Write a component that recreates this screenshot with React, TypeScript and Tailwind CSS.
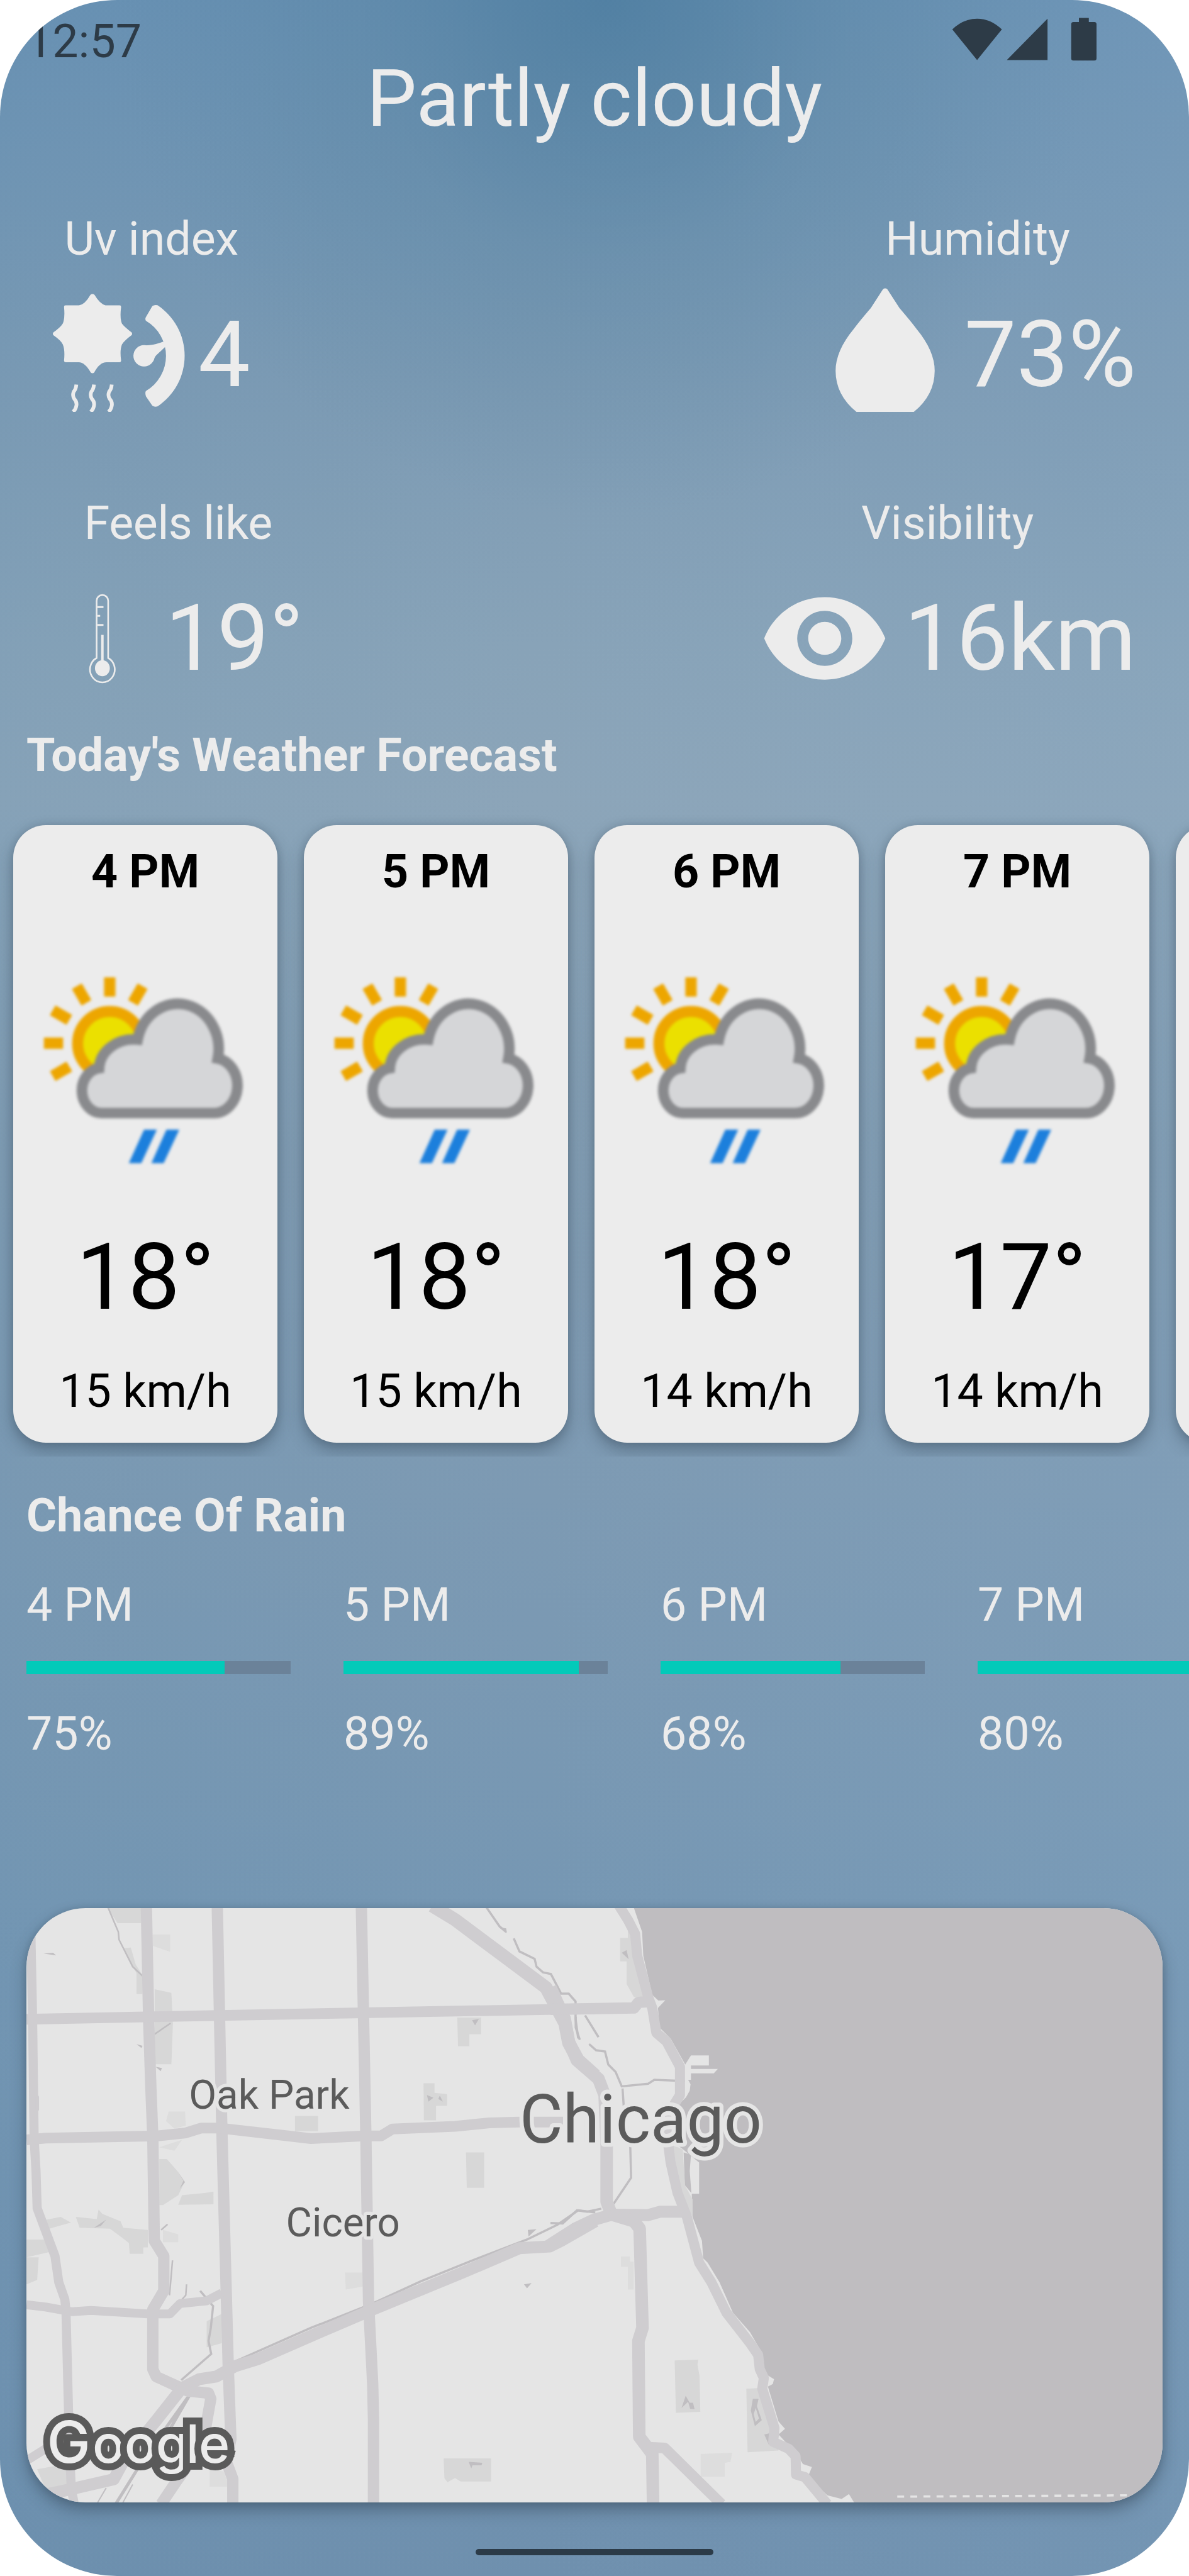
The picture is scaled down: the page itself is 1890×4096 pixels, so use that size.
import React from "react";

const hours = [
  { time: "4 PM", temp: "18°", wind: "15 km/h" },
  { time: "5 PM", temp: "18°", wind: "15 km/h" },
  { time: "6 PM", temp: "18°", wind: "14 km/h" },
  { time: "7 PM", temp: "17°", wind: "14 km/h" },
  { time: "", temp: "", wind: "" },
];

const rain = [
  { time: "4 PM", chance: 75 },
  { time: "5 PM", chance: 89 },
  { time: "6 PM", chance: 68 },
  { time: "7 PM", chance: 80 },
];

function StatusIcons() {
  return (
    <svg className="h-[80.5px] w-[245px] fill-[#2d3b47]" viewBox="1720 24 280 92">
      <path d="M1775 109L1730 53.500Q1750 34 1775 34Q1800 34 1820 53.500Z" />
      <path d="M1903 34V109H1829Z" />
      <path d="M1960 32.500H1978V40H1988Q1992 40 1992 44V106Q1992 110 1988 110H1950Q1946 110 1946 106V44Q1946 40 1950 40H1960Z" />
    </svg>
  );
}

function UvIcon() {
  const wave = "M176 565Q174 590 162 603Q153 625 165 643Q178 655 177 675Q174 700 158 713";
  return (
    <svg className="size-[210px] fill-[#ececec]" viewBox="48 -6 720 720">
      <path d="M253 75Q264 67 275 75Q303 123 335 133H412Q420 133 420 141Q412 205 425 233Q440 252 478 281Q482 288 478 295Q440 323 425 345Q412 375 420 435Q420 443 412 443H345Q303 440 273 500Q264 506 255 500Q222 440 185 443H117Q109 443 109 435Q115 375 102 345Q90 323 51 296Q45 288 51 280Q90 252 102 232Q115 205 109 141Q109 133 117 133H190Q222 129 253 75Z" />
      <path d="M618 132A331 331 0 0 1 618 684Q602 688 590 680L556 630Q549 610 555 600A222 222 0 0 0 555 217Q549 205 556 195L590 137Q602 128 618 132Z" />
      <circle cx="545" cy="408" r="58" />
      <path d="M545 351Q590 354 650 331L664 356L612 405Q602 415 595 437Z" />
      <g className="fill-none stroke-[#ececec]" strokeWidth="20">
        <path d={wave} />
        <path d={wave} transform="translate(96 0)" />
        <path d={wave} transform="translate(193 0)" />
      </g>
    </svg>
  );
}

function DropIcon() {
  return (
    <svg className="size-[210px] fill-[#ececec]" viewBox="1488 508 240 240">
      <path d="M1604 525Q1608 522 1612 525L1634 559Q1652 580 1665 597Q1698 637 1698 673Q1698 717 1660 748H1556Q1518 717 1518 673Q1518 637 1551 597Q1564 580 1582 559Z" />
    </svg>
  );
}

function EyeIcon() {
  return (
    <svg className="size-[210px] fill-[#ececec]" viewBox="0 0 24 24">
      <path d="M12 4.500C7 4.500 2.730 7.610 1 12c1.730 4.390 6 7.500 11 7.500s9.270-3.110 11-7.500c-1.730-4.390-6-7.500-11-7.500zM12 17c-2.760 0-5-2.240-5-5s2.240-5 5-5 5 2.240 5 5-2.240 5-5 5zm0-8c-1.660 0-3 1.340-3 3s1.340 3 3 3 3-1.340 3-3-1.340-3-3-3z" />
    </svg>
  );
}

function ThermometerIcon() {
  return (
    <svg className="size-[157.5px] fill-none stroke-[#ececec]" viewBox="96 1070 180 180" strokeWidth="3">
      <path d="M175.500 1196V1092A10.500 10.500 0 0 1 196.500 1092V1196A22.500 23.500 0 1 1 175.500 1196Z" />
      <path d="M177 1103.500H188M177 1119.500H182M177 1136H188" strokeWidth="3.500" />
      <path d="M186 1154V1205" strokeWidth="4.500" />
      <ellipse cx="186" cy="1214.500" rx="13.500" ry="14.500" className="fill-[#ececec] stroke-none" />
    </svg>
  );
}

function WeatherIcon() {
  return (
    <svg className="size-[350px] blur-[2px]" viewBox="12 0 1200 1200">
      <g transform="translate(418 462)" className="fill-[#eda600]">
        {[-120, -90, -60, -30, 0, 30].map((angle) => (
          <rect key={angle} x="-31" y="-359" width="62" height="105" rx="4" transform={`rotate(${angle})`} />
        ))}
      </g>
      <circle cx="418" cy="464" r="175" strokeWidth="60" className="fill-[#ebe000] stroke-[#eda600]" />
      <path
        d="M985 843H372A107 123 0 0 1 360 598A190 165 0 0 1 570 442A222 245 0 0 1 1007 545A128 150 0 0 1 985 843Z"
        strokeWidth="58"
        className="fill-[#d5d6d8] stroke-[#898a8d]"
      />
      <path d="M605 933H675L590 1116H522ZM727 933H797L712 1116H645Z" className="fill-[#1c7fdc]" />
    </svg>
  );
}

function CityMap() {
  const west = "matrix(0.6888 0 0 0.7908 0 3440)";
  const east = "matrix(0.7398 0 0 0.7908 1000 3440)";
  return (
    <svg
      className="block h-[945px] w-[1806px] [&_.l_path]:[vector-effect:non-scaling-stroke]"
      viewBox="48 3468 2064 1080"
    >
      <rect x="48" y="3468" width="2064" height="1080" fill="#e5e5e5" />

      {/* lake */}
      <g transform={east} fill="#bfbdc0">
        <path d="M203 30L225 90L228 145L250 235L265 248L282 247L264 265L268 310L295 335L331 395L345 374H389V397H345V405H411L401 415H345V430H338L344 440L342 455L333 470L320 482L300 500L280 560L323 588L365 620V692H347L349 745L372 800L375 840L386 850L415 895L434 935L448 965L490 1010L521 1060L526 1105L549 1118L546 1129L534 1135L560 1215L576 1232L560 1245L605 1290L620 1313L642 1320L632 1343L680 1385L715 1393L733 1382L748 1405H1600V30Z" />
        <path d="M327 597L345 602L342 640L346 690L330 672Z" />
      </g>

      {/* parks */}
      <g transform={west} fill="#d7d7d7">
        <path d="M280 30H372V70H310ZM325 128L345 126L358 165L376 190V233H360V185ZM408 222L452 230L456 300L452 394H408ZM1206 287H1269V325H1238V353H1208ZM1117 438H1146V460L1179 463V490H1150V523H1118ZM778 513H839V548H778ZM1229 597H1277V678H1231ZM420 612H440L468 640L487 665L470 695L430 718H420ZM470 717L480 695L540 690L563 687V716ZM545 985L585 968V1035L545 1045ZM1170 1300H1295V1353H1215L1200 1345L1180 1355L1172 1345ZM200 745L255 750L260 728L270 738L318 755L325 770L390 775V815H378V830H342L340 805L318 790L290 772L210 770ZM120 752L160 745L187 758L130 772ZM70 797H120L135 825L70 838ZM70 838H102L98 890L70 900ZM98 1325L190 1310V1370H120Z" />
        <path opacity=".6" d="M403 96H449V136L403 122ZM445 503H488L490 535L460 542L438 525ZM420 585L480 568L460 593ZM910 873H957V905L912 912ZM553 1325L590 1330L605 1365H553ZM430 775L470 785V803H430Z" />
      </g>
      <g transform={east} fill="#d7d7d7">
        <path d="M305 1075L363 1073L361 1085L366 1110L368 1193L308 1195ZM481 1140L515 1138L560 1282L484 1286ZM171 104H190V80L205 110L228 240H205L187 210V158H171ZM300 580L325 590L330 672L349 705V745L320 690Z" />
        <path opacity=".6" d="M369 1290L446 1287L442 1308L428 1310V1342H369ZM173 836H195V848H204V912H190V860H173Z" />
      </g>

      {/* waterways */}
      <g className="l" transform={west} fill="none" stroke="#c0bec1" strokeWidth="3.5">
        <path d="M283 30L312 90L314 108L350 170L378 193" strokeWidth="2.5" />
        <path d="M1280 30L1318 78L1335 90M1355 105L1370 135L1410 152L1415 170L1432 183L1453 187L1480 232L1500 232L1518 250V290L1525 335" />
        <path d="M408 325L450 300M425 775L442 762M455 845L447 925M492 900L490 925L452 962" strokeWidth="2.5" />
        <path d="M528 915L562 950L556 1000L550 1030L557 1060L478 1120" />
        <path d="M515 1132L440 1245M495 1160L380 1300L305 1405" strokeWidth="5" />
        <path d="M280 1368L255 1405M350 1360L322 1405" strokeWidth="2" />
        <path d="M620 1077L820 1000L980 945L1110 893L1240 847L1390 797L1470 763L1525 730L1570 735" />
      </g>
      <g className="l" transform={east} fill="none" stroke="#c0bec1" strokeWidth="3.5">
        <path d="M62 285V310L72 338M85 282L118 332M95 348L112 362L134 365L142 395L160 412L175 445L240 439L255 430L330 433M177 450L182 520L196 585L198 655L155 715M125 726L90 733L65 730L30 760L0 759" />
      </g>
      <g transform={west} fill="#c0bec1">
        <path d="M115 140L140 138L148 144ZM1245 293L1263 290L1253 305ZM1126 465L1143 471L1130 480ZM1156 474L1160 466L1168 480ZM1382 900L1402 897L1390 909ZM1236 1308L1272 1310L1270 1316L1246 1316L1243 1323ZM410 400L427 403L424 410ZM360 348L376 352L373 357ZM248 770L280 751L266 766ZM1392 775L1415 773L1394 790ZM1320 80L1335 82L1337 93ZM468 640L488 665L474 680L484 662Z" />
      </g>
      <g transform={east} fill="#c0bec1">
        <path d="M175 138L187 132L192 153ZM332 1156L342 1172L350 1172L354 1187L343 1186L338 1170L322 1184Z" />
        <path d="M497 1163H511L507 1180L519 1212L502 1226L492 1190ZM504 1184L499 1198L504 1216L512 1208Z" fillRule="evenodd" />
        <path d="M525 1245L538 1242L536 1268Z" />
      </g>

      {/* roads */}
      <g className="l" transform={west} fill="none" stroke="#cfcdd0" strokeWidth="18" strokeLinejoin="round">
        <path d="M80 30L86 290L90 565L95 640L98 725L145 835L155 895L171 935L174 960L183 1270L188 1370L196 1405" strokeWidth="14.500" />
        <path d="M386 30L392 290L398 450L403 560L407 800L432 835V915L403 958V1095L412 1112L495 1145L550 1150L556 1163L542 1231L500 1310L465 1353L425 1405" />
        <path d="M573 30L585 540L602 1090L609 1256L596 1305L614 1347V1405" />
        <path d="M953 30L965 560L972 940L983 1130L985 1210V1405" />
        <path d="M70 291L578 282L957 276L1468 268L1570 267" strokeWidth="17" />
        <path d="M70 568L120 564L415 559L490 552L530 541H580L760 559L820 565L960 559H1005L1035 543L1200 537L1290 529L1370 527H1485" strokeWidth="17" />
        <path d="M1140 30L1200 62L1320 140L1440 218L1490 300L1500 345L1525 385L1570 420" strokeWidth="21" />
        <path d="M110 1385L180 1372L300 1348L330 1300L410 1215L480 1138L525 1118L570 1112L620 1088L680 1072L830 1015L985 957L1220 873L1370 817L1450 813L1480 800L1570 755" strokeWidth="19" />
        <path d="M70 947L120 952L190 963L240 960L390 968H448L475 944L545 938L585 920" strokeWidth="14" />
        <path d="M70 1305L120 1278L150 1265" strokeWidth="14" />
        <path d="M98 470V498M98 610V632" strokeWidth="6" strokeLinecap="round" />
      </g>
      <g className="l" transform={east} fill="none" stroke="#cfcdd0" strokeWidth="18" strokeLinejoin="round">
        <path d="M0 218L35 290L45 342L65 385L118 428L133 465L138 580V710L150 740" strokeWidth="20" />
        <path d="M0 268L205 265L216 252L250 250" />
        <path d="M165 25L190 62L208 95L213 145L240 240L250 265L260 322L285 342L318 400V465L295 500L288 570L295 620L312 690L335 745L365 850L395 895L432 965L490 1035L510 1062L514 1095L524 1115L520 1140L550 1230L547 1262L585 1278L602 1295L603 1337L625 1343L680 1405" strokeWidth="16" />
        <path d="M-5 811L60 772L105 752L150 740L240 741L270 733H330" strokeWidth="19" />
        <path d="M145 738L205 755L219 772L226 1000L216 1030L218 1250L250 1290L252 1405" strokeWidth="20" />
        <path d="M235 1274L280 1276L420 1405" strokeWidth="17" />
      </g>

      <path d="M1630 4537.500L2060 4535" stroke="#e5e5e5" strokeWidth="4" strokeDasharray="12.500 11.300" />

      <g
        className="font-[Roboto,sans-serif]"
        fill="#5b5b5b"
        stroke="#e5e5e5"
        strokeLinejoin="round"
        strokeWidth="12"
        paintOrder="stroke"
      >
        <text x="343" y="3832" fontSize="75" textLength="292" lengthAdjust="spacingAndGlyphs">Oak Park</text>
        <text x="519.5" y="4065" fontSize="75" textLength="207" lengthAdjust="spacingAndGlyphs">Cicero</text>
        <text x="944" y="3894" fontSize="123" strokeWidth="15" textLength="440" lengthAdjust="spacingAndGlyphs">Chicago</text>
      </g>

      <text
        x="85 168 226 283 338 361"
        y="4476"
        className="font-[Inter,sans-serif] font-medium"
        fontSize="96"
        fill="#ececec"
        stroke="#5a5a5a"
        strokeWidth="25"
        paintOrder="stroke"
      >
        <tspan fontSize="106">G</tspan>
        oogle
      </text>
    </svg>
  );
}

function Metric({
  label,
  value,
  icon,
  gap,
  shift = "",
  tracking = "",
}: {
  label: string;
  value: string;
  icon: React.ReactNode;
  gap: string;
  shift?: string;
  tracking?: string;
}) {
  return (
    <div className="flex flex-col items-center">
      <div className={`text-[73.5px] leading-none ${tracking}`}>{label}</div>
      <div className={`flex h-[210px] items-center gap-[21px] ${gap}`}>
        {icon}
        <span className={`text-[147px] leading-none ${shift}`}>{value}</span>
      </div>
    </div>
  );
}

export default function App() {
  return (
    <div className="h-[4096px] w-[1890px] overflow-hidden bg-white font-[Roboto,sans-serif]">
      <div className="flex h-full w-full flex-col overflow-hidden whitespace-nowrap rounded-[186px] bg-[radial-gradient(ellipse_780px_820px_at_51%_0%,rgba(66,117,152,0.6),rgba(75,123,153,0.24)_50%,rgba(80,125,160,0)_100%),linear-gradient(90deg,rgba(90,140,175,0.12),rgba(255,255,255,0)_45%,rgba(140,175,205,0.16)),linear-gradient(180deg,#6991b3_0%,#7d9bb4_15%,#88a3b8_25%,#8ca5b9_31%,#829db3_45%,#7d9ab3_58%,#7697b3_74%,#6f90ae_100%)] text-[#ececec]">
        <header className="flex h-[93.5px] shrink-0 items-start justify-between pl-[42px] pr-[140px] text-[#2d3b47]">
          <span className="mt-[29.6px] text-[73.5px] leading-none">12:57</span>
          <div className="mt-[21px]">
            <StatusIcons />
          </div>
        </header>

        <h1 className="text-center text-[126px] leading-none">Partly cloudy</h1>

        <section className="mt-[124px] flex justify-between px-[84px]">
          <Metric label="Uv index" value="4" icon={<UvIcon />} gap="mt-[27.5px]" shift="mt-[29px]" />
          <Metric label="Humidity" value="73%" icon={<DropIcon />} gap="mt-[27.5px]" shift="mt-[29px]" />
        </section>
        <section className="mt-[141px] flex justify-between px-[84px]">
          <Metric label="Feels like" value="19°" icon={<ThermometerIcon />} gap="mt-[41px]" tracking="tracking-[-0.4px]" />
          <Metric label="Visibility" value="16km" icon={<EyeIcon />} gap="mt-[41px]" />
        </section>

        <h2 className="mt-[45px] pl-[42px] text-[73.5px] font-bold leading-none">Today's Weather Forecast</h2>
        <div className="mt-[52px] flex h-[1025px] shrink-0 gap-[42px] overflow-hidden px-[21px] pt-[21px]">
          {hours.map((h, i) => (
            <article
              key={i}
              className="flex h-[982px] w-[420px] shrink-0 flex-col items-center rounded-[52px] bg-[#ececec] pt-[38px] leading-none text-black shadow-[0_12px_26px_rgba(40,55,70,0.38),0_0_12px_rgba(40,55,70,0.16)]"
            >
              {h.time && (
                <>
                  <div className="text-[73.5px] font-bold leading-none">{h.time}</div>
                  <div className="mt-[100.5px]">
                    <WeatherIcon />
                  </div>
                  <div className="mt-[84px] text-[147px] leading-none">{h.temp}</div>
                  <div className="mt-[71px] text-[73.5px] leading-none">{h.wind}</div>
                </>
              )}
            </article>
          ))}
        </div>

        <h2 className="mt-[58.5px] pl-[42px] text-[73.5px] font-bold leading-none">Chance Of Rain</h2>
        <div className="mt-[68.5px] flex gap-[84px] pl-[42px]">
          {rain.map((r) => (
            <div key={r.time} className="w-[420px] shrink-0 text-[73.5px] leading-none">
              <div>{r.time}</div>
              <div className="mt-[51.5px] h-[21px] bg-[#6b8299]">
                <div className="h-full bg-[#03cab9]" style={{ width: `${r.chance}%` }} />
              </div>
              <div className="mt-[59px]">{r.chance}%</div>
            </div>
          ))}
        </div>

        <div className="mx-[42px] mt-[239.5px] shrink-0 rounded-[94px] shadow-[0_12px_24px_rgba(40,55,70,0.42),0_0_10px_rgba(40,55,70,0.18)]">
          <div className="overflow-hidden rounded-[94px]">
            <CityMap />
          </div>
        </div>

        <div className="mx-auto mt-[73.5px] h-[10.5px] w-[378px] shrink-0 rounded-full bg-[#2c3b48]" />
      </div>
    </div>
  );
}
